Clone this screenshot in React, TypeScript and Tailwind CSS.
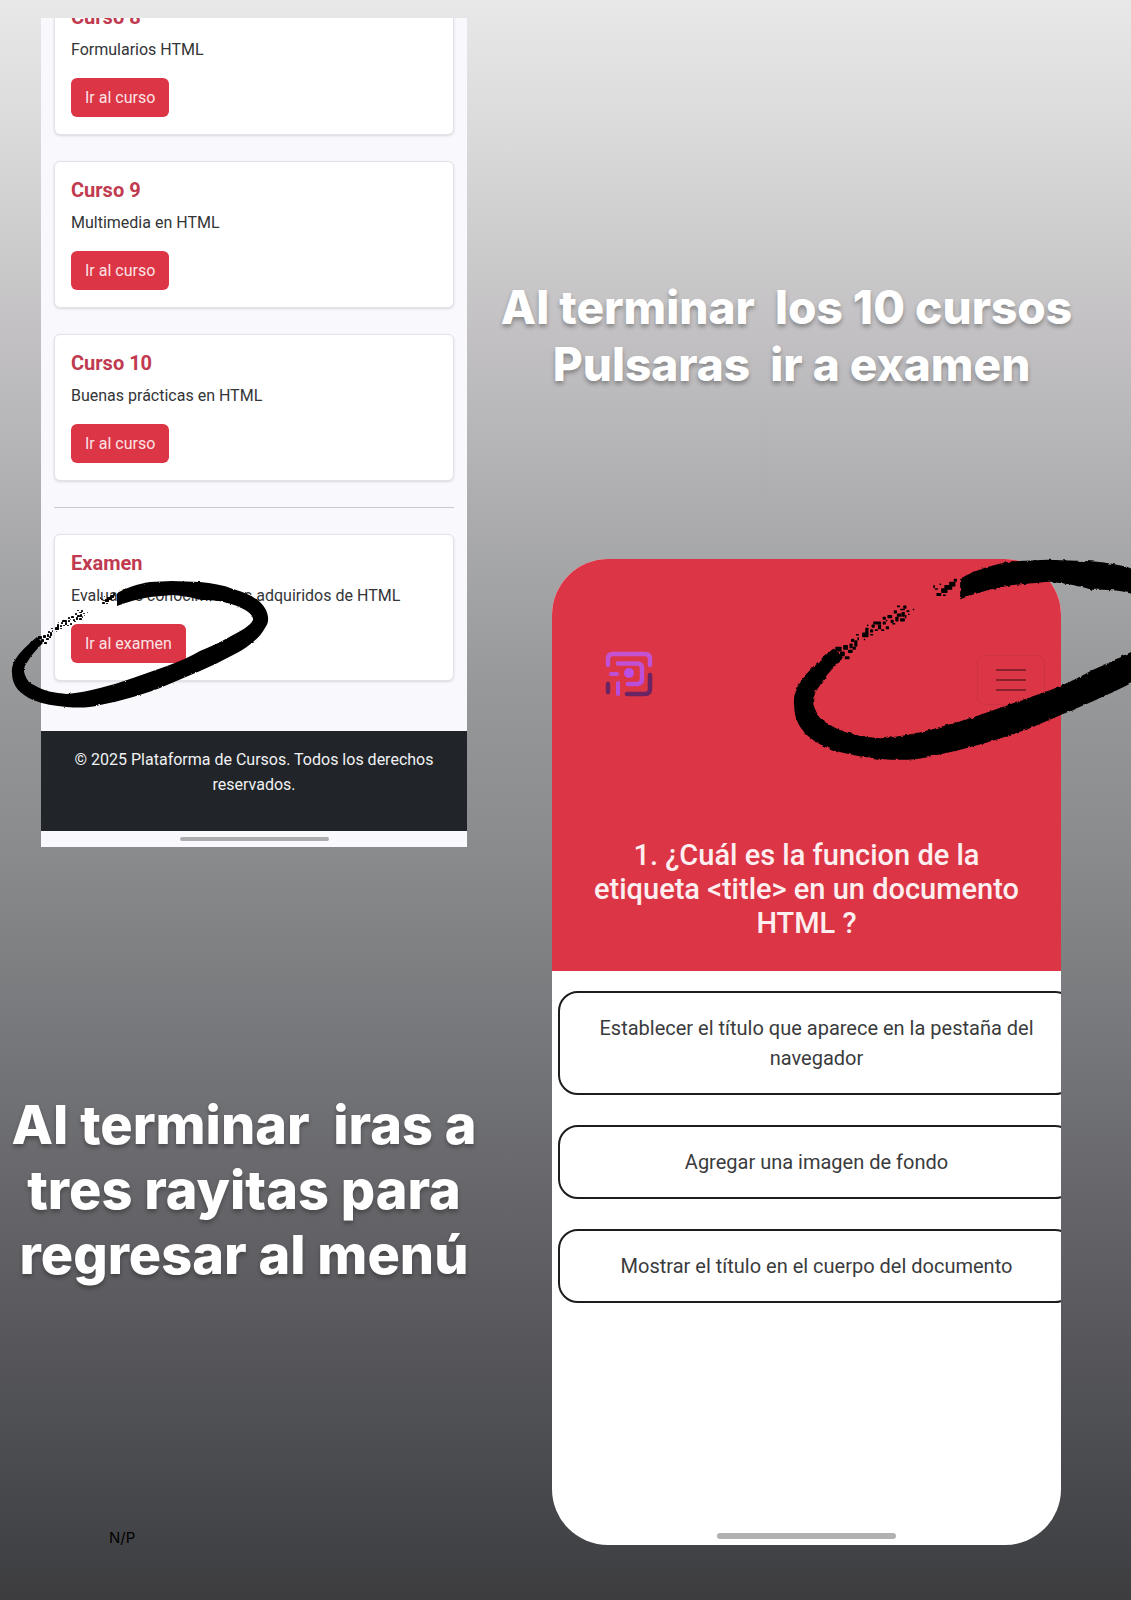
import type { ReactNode } from 'react';

const SPECKS: [number, number, number, number][] = [
  [28, 58, 4, 3], [31, 61, 3, 3], [33, 57, 3, 3], [36, 60, 3, 2], [34, 64, 3, 2], [37, 56, 2, 3], [30, 65, 2, 1],
  [39, 58, 2, 2], [38, 53, 2, 2], [40, 54, 2, 4], [42, 52, 1, 2], [41, 50, 2, 1],
  [45, 49, 4, 3], [47, 46, 2, 4], [50, 47, 2, 2], [50, 50, 2, 1], [48, 44, 1, 1], [46, 53, 1, 1],
  [52, 42, 5, 2], [51, 44, 2, 2], [55, 44, 2, 3], [58, 42, 2, 2], [57, 47, 2, 1], [53, 47, 2, 1], [60, 45, 2, 2],
  [58, 39, 2, 2], [61, 38, 3, 2], [63, 41, 2, 2], [64, 43, 2, 1], [60, 41, 1, 1],
  [65, 35, 2, 2], [67, 37, 3, 2], [66, 39, 2, 3], [69, 34, 3, 1], [70, 36, 2, 3], [69, 40, 3, 2],
  [72, 38, 1, 2], [73, 35, 2, 1], [67, 32, 2, 1], [71, 32, 2, 2], [74, 37, 1, 1], [77, 34, 1, 1],
  [90, 19, 1, 2], [92, 24, 3, 2], [91, 21, 2, 1], [95, 21, 4, 3], [97, 19, 5, 3], [100, 17, 4, 3],
  [103, 15, 2, 2], [94, 18, 1, 1], [107, 15, 1, 1], [96, 25, 2, 1],
];

function MarkerLoop({ id, className }: { id: string; className: string }) {
  return (
    <svg viewBox="0 0 260 132" fill="#000" aria-hidden="true" className={className}>
      <filter id={id} x="-5%" y="-5%" width="110%" height="110%">
        <feTurbulence type="fractalNoise" baseFrequency="0.35" numOctaves="2" seed="4" />
        <feDisplacementMap in="SourceGraphic" scale="2" xChannelSelector="R" yChannelSelector="G" />
      </filter>
      <g filter={`url(#${id})`}>
        <path d="M107 15 C118 9 128 6 140 4 L162 3 L190 4 C202 5 213 7 223 11 C240 16 251 22 256 32 C259 39 259 45 255 50 C250 60 237 70 223 77 C212 83 201 88 190 93 L157 107 C146 112 135 115 123 119 C112 122 101 125 90 127 C79 130 68 130 57 129 C45 128 33 126 23 122 C10 116 2 108 2 95 C1 88 5 81 10 75 C15 69 21 64 27 59 L33 65 C27 71 22 76 18 83 C14 88 13 92 15 97 C17 102 19 105 24 107 C33 113 45 115 57 116 C68 115 79 113 90 110 C101 107 112 104 123 100 L157 88 C168 84 180 79 190 73 C202 68 213 63 223 57 C232 52 240 48 243 42 C244 35 230 28 217 25 C208 22 200 22 190 22 C181 19 172 18 163 17 L140 19 C128 21 117 24 107 28 Z" />
      </g>
      {SPECKS.map(([x, y, w, h]) => (
        <rect key={`${x}-${y}`} x={x} y={y} width={w} height={h} rx="0.4" />
      ))}
    </svg>
  );
}

function Logo() {
  return (
    <svg viewBox="0 0 48 48" fill="none" strokeWidth="4.5" strokeLinecap="round" className="size-12" role="img" aria-label="Plataforma">
      <defs>
        <linearGradient id="logo" x1="0" y1="0" x2="0" y2="48" gradientUnits="userSpaceOnUse">
          <stop offset="0" stopColor="#c653cf" />
          <stop offset="1" stopColor="#b44be0" />
        </linearGradient>
      </defs>
      <path stroke="url(#logo)" d="M3 14 V8 Q3 3 8 3 H40 Q45 3 45 8 V14" />
      <path stroke="url(#logo)" d="M13 12.500 H32 Q37 12.500 37 17.500 V28 Q37 33 32 33 H23" />
      <path stroke="url(#logo)" strokeWidth="4" d="M6 23 H12 M13 32 V43" />
      <circle cx="24" cy="22" r="5" fill="#b94fe6" />
      <path stroke="#6b2463" d="M3 33 V41 M45 24 V38 Q45 43 40 43 H22" />
    </svg>
  );
}

function Card({ title, text, action }: { title: string; text: string; action: string }) {
  return (
    <article className="rounded-md border border-[#e4e1e8] bg-white p-4 pb-[17px] shadow-sm">
      <h2 className="mb-2 text-xl leading-6 font-bold text-[#c03a50]">{title}</h2>
      <p className="mb-4 text-base leading-[25px] text-[#333537]">{text}</p>
      <button type="button" className="block rounded-md bg-[#dc3545] px-3.5 py-[7px] text-base leading-[25px] text-[#fbe3e6]">
        {action}
      </button>
    </article>
  );
}

function Answer({ children }: { children: ReactNode }) {
  return (
    <button type="button" className="block w-full rounded-[20px] border-2 border-[#1c1d1f] bg-white px-9 py-5 text-center text-xl leading-[30px] text-[#3a3b3d]">
      {children}
    </button>
  );
}

const COURSES = [
  ['Curso 8', 'Formularios HTML'],
  ['Curso 9', 'Multimedia en HTML'],
  ['Curso 10', 'Buenas prácticas en HTML'],
];

export default function App() {
  return (
    <main className="relative grid min-h-screen grid-cols-[480fr_651fr] overflow-hidden bg-[linear-gradient(to_bottom,#e8e8e8_0%,#d9d9d9_9%,#c2c0c2_21%,#aeaeb0_31%,#969899_43%,#8a8b8c_53%,#717276_68%,#5c5b5f_81%,#505155_88%,#45474a_94%,#3d3d40_100%)] font-[Roboto,sans-serif]">
      <div className="flex flex-col">
        <section className="relative mt-[18px] mr-[13px] ml-[41px]">
          <div className="overflow-hidden bg-[#f9f8fd]">
            <div className="-mt-[30px] flex flex-col gap-[26px] px-[13px] pb-[50px]">
              {COURSES.map(([title, text]) => (
                <Card key={title} title={title} text={text} action="Ir al curso" />
              ))}
              <hr className="border-[#cbc9cf]" />
              <Card title="Examen" text="Evalua los conocimientos adquiridos de HTML" action="Ir al examen" />
            </div>
            <footer className="bg-[#212529] px-4 pt-4 pb-[34px] text-center text-base leading-[25px] text-[#f1f1f3]">
              © 2025 Plataforma de Cursos. Todos los derechos reservados.
            </footer>
            <div className="flex h-4 items-center justify-center">
              <div className="h-1 w-[149px] rounded-full bg-[#acacae]" />
            </div>
          </div>
          <MarkerLoop id="rough-exam" className="pointer-events-none absolute bottom-[137px] -left-[31px] w-[260px]" />
        </section>
        <h1 className="mt-[245px] pl-2 text-center font-[Inter,sans-serif] text-[54px] leading-[65px] font-extrabold whitespace-pre text-white [text-shadow:0_3px_4px_rgba(0,0,0,0.3)]">
          {'Al terminar  iras a\ntres rayitas para\nregresar al menú'}
        </h1>
        <p className="mt-[239px] ml-[109px] font-[Inter,sans-serif] text-[15px] leading-6 text-black">N/P</p>
      </div>

      <div className="flex flex-col">
        <h1 className="mt-[279px] pr-[38px] text-center font-[Inter,sans-serif] text-[46px] leading-[57px] font-extrabold whitespace-pre text-white [text-shadow:0_3px_4px_rgba(0,0,0,0.3)]">
          {'Al terminar  los 10 cursos\n Pulsaras  ir a examen'}
        </h1>
        <section className="relative mt-[166px] mr-[70px] ml-[72px]">
          <div className="flex min-h-[986px] flex-col overflow-hidden rounded-[56px] bg-white">
            <header className="bg-[#dc3545] pb-[31px] text-center">
              <div className="flex items-start justify-between pt-[92px] pr-4 pl-[53px]">
                <Logo />
                <button type="button" aria-label="Menú" className="mt-1 flex h-[50px] w-[68px] flex-col items-center justify-center gap-2 rounded-lg border border-[#cf3243]">
                  <span className="h-0.5 w-[30px] bg-[#86202b]" />
                  <span className="h-0.5 w-[30px] bg-[#86202b]" />
                  <span className="h-0.5 w-[30px] bg-[#86202b]" />
                </button>
              </div>
              <h2 className="mt-[133px] px-9 text-[29px] leading-[34px] font-medium text-[#fdeef0]">
                1. ¿Cuál es la funcion de la etiqueta &lt;title&gt; en un documento HTML ?
              </h2>
            </header>
            <div className="-mr-[14px] ml-1.5 flex flex-col gap-[30px] pt-5">
              <Answer>Establecer el título que aparece en la pestaña del navegador</Answer>
              <Answer>Agregar una imagen de fondo</Answer>
              <Answer>Mostrar el título en el cuerpo del documento</Answer>
            </div>
            <div className="mx-auto mt-auto mb-1.5 h-[6px] w-[179px] rounded-full bg-[#b1b1b1]" />
          </div>
          <MarkerLoop id="rough-menu" className="pointer-events-none absolute -top-1 left-[239px] w-[411px]" />
        </section>
      </div>
    </main>
  );
}
